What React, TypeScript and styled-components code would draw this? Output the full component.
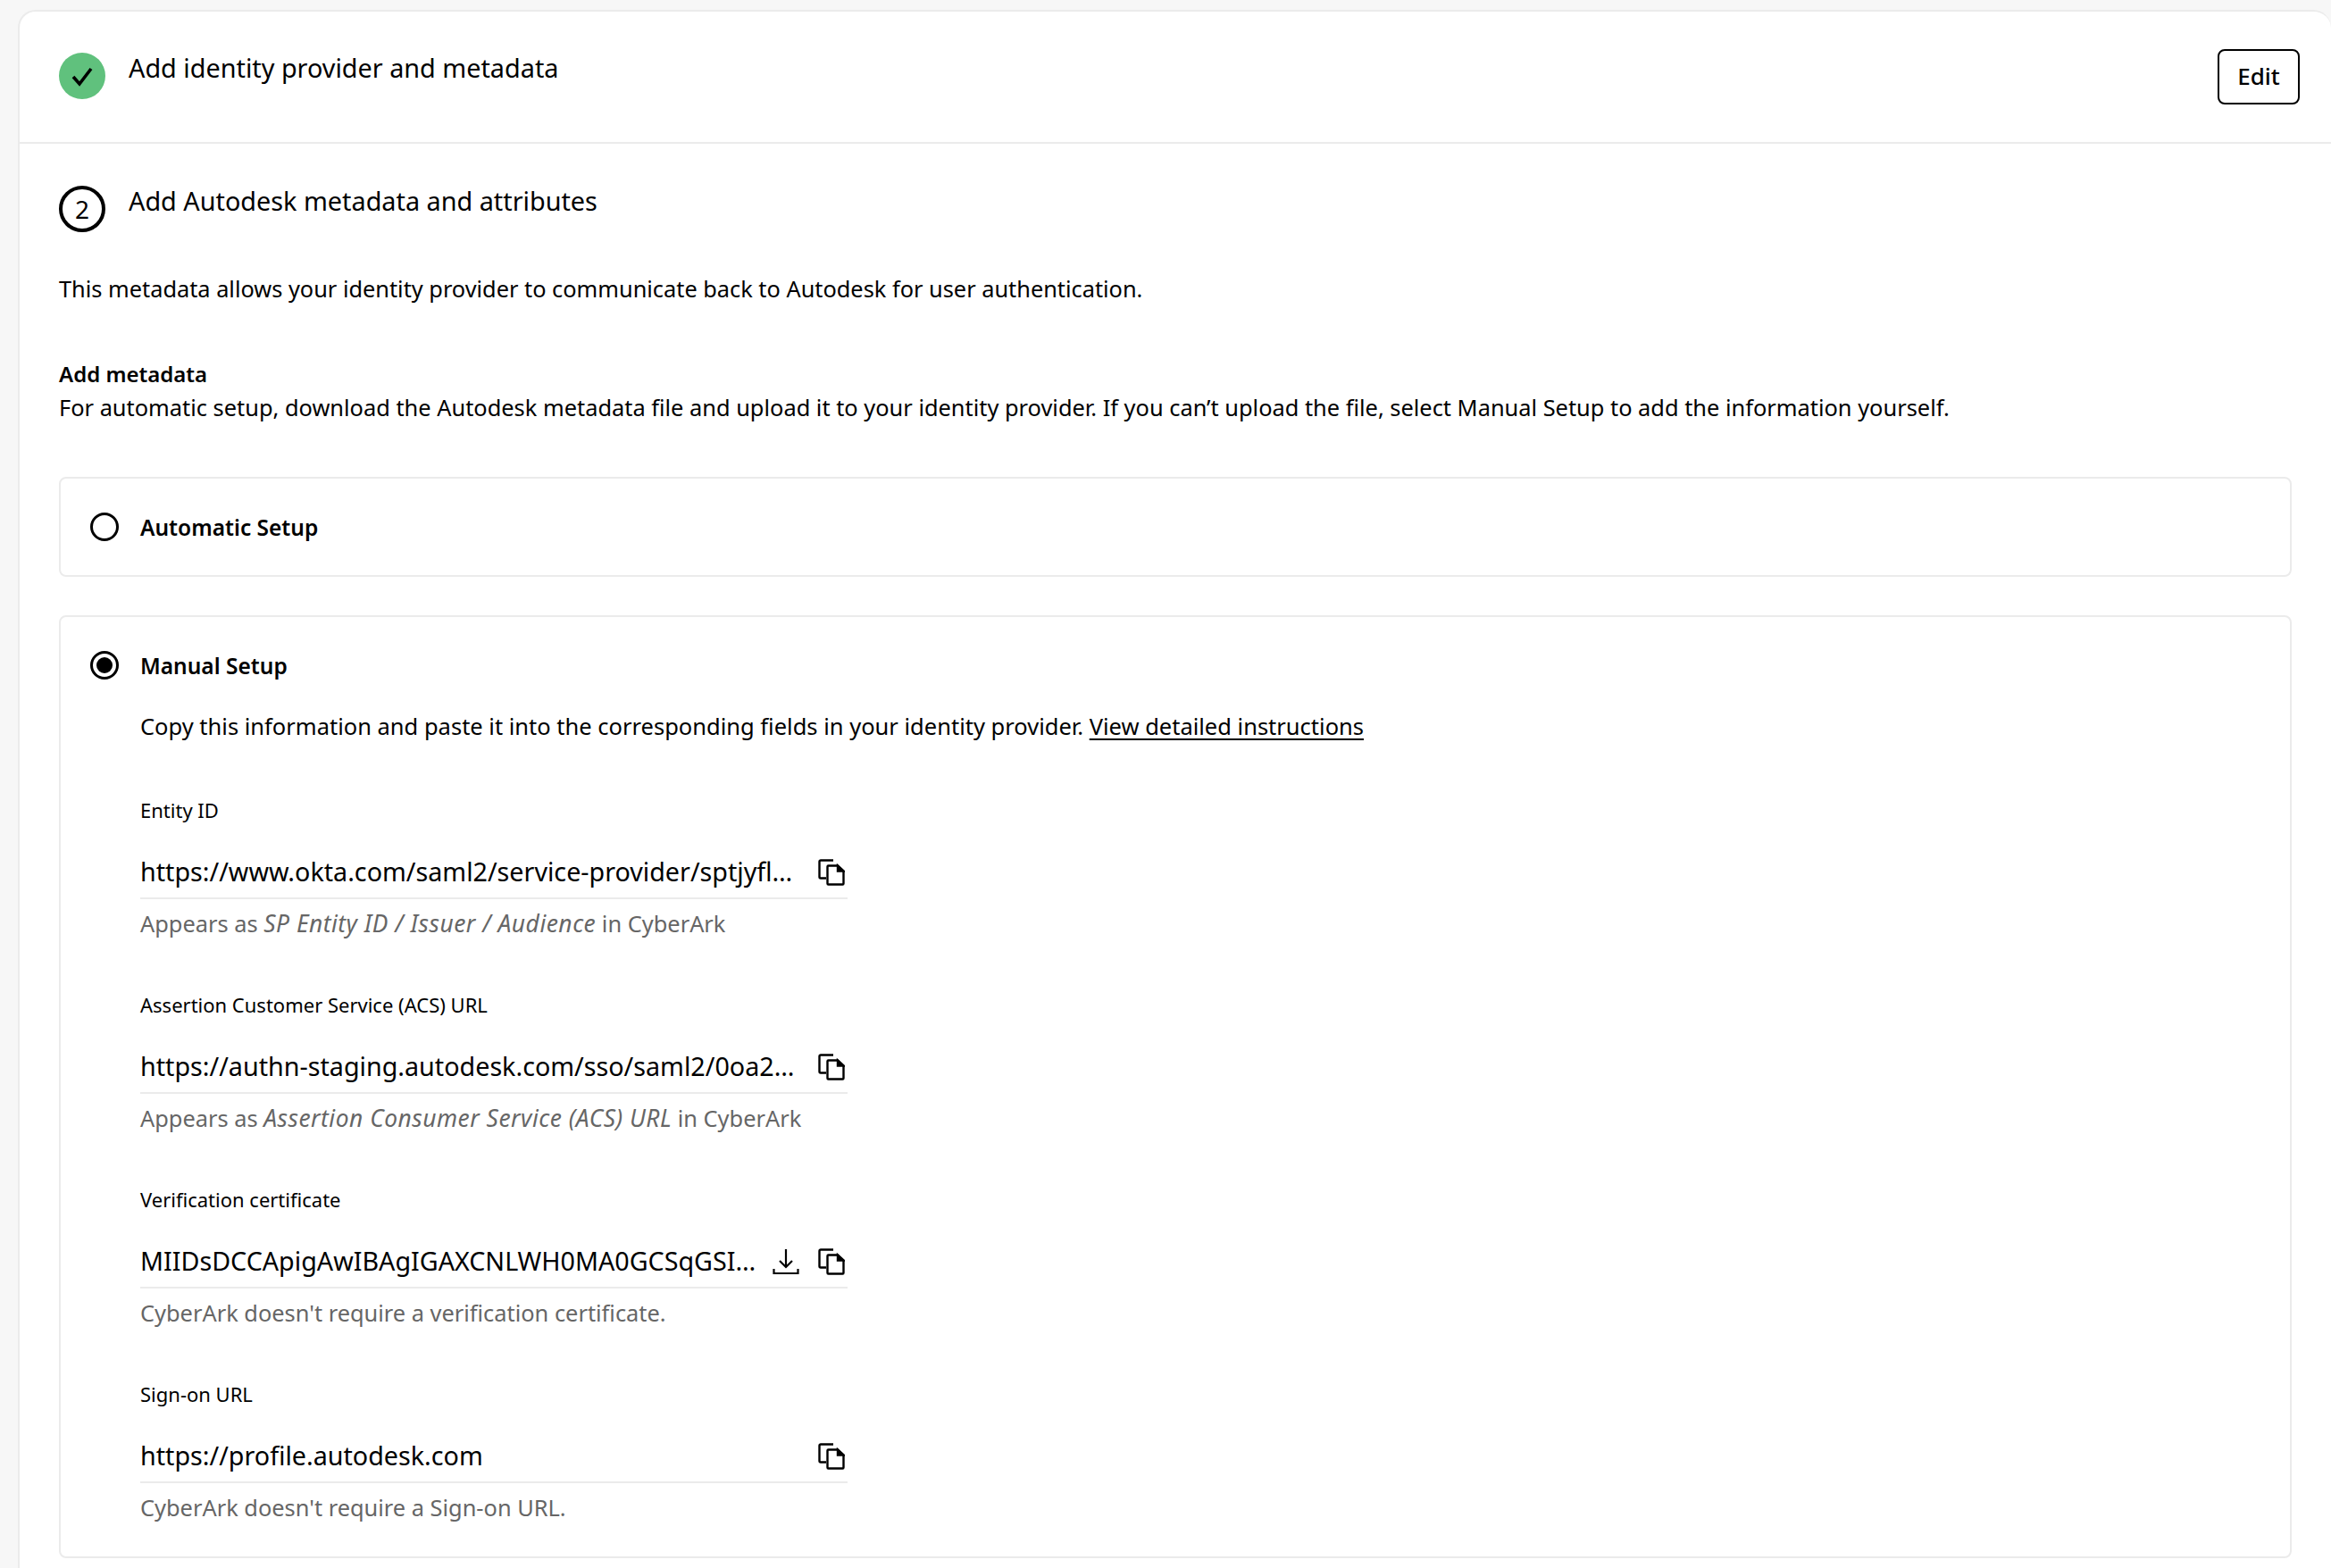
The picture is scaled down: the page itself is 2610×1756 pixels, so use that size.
import styled, { createGlobalStyle } from 'styled-components';

const GlobalStyle = createGlobalStyle`
  html, body {
    margin: 0;
    height: 1756px;
    overflow: hidden;
    background: #f7f7f7;
    color: #000;
    font-family: "Noto Sans", "Open Sans", sans-serif;
  }
  * { box-sizing: border-box; }
`;

const Page = styled.div`
  padding: 11px 0 0 20px;
  height: 1756px;
  overflow: hidden;
`;

const Card = styled.div`
  background: #fff;
  border: 2px solid #ebebeb;
  border-right: none;
  border-radius: 20px 20px 0 0;
  width: 2590px;
  padding-bottom: 100px;
`;

const DoneStep = styled.section`
  display: flex;
  justify-content: space-between;
  height: 148px;
  padding: 46px 35px 0 44px;
  border-bottom: 2px solid #ebebeb;
`;

const StepHeading = styled.div`
  display: flex;
  gap: 26px;
`;

const StepTitle = styled.h2`
  margin: -3px 0 0;
  font-size: 28.8px;
  line-height: 40px;
  font-weight: 400;
`;

const DoneBadge = styled.span`
  width: 52px;
  height: 52px;
  border-radius: 50%;
  background: #60c17d;
  display: flex;
  align-items: center;
  justify-content: center;
`;

const NumberBadge = styled.span`
  width: 52px;
  height: 52px;
  border-radius: 50%;
  border: 4px solid #000;
  display: flex;
  align-items: center;
  justify-content: center;
  font-size: 28px;
`;

const EditButton = styled.button`
  width: 92px;
  height: 62px;
  margin-top: -4px;
  background: #fff;
  border: 2px solid #000;
  border-radius: 8px;
  font-family: inherit;
  font-size: 26px;
  font-weight: 500;
  color: #000;
  padding: 0 0 3px;
`;

const ActiveStep = styled.section`
  padding: 47px 0 0 44px;
`;

const Intro = styled.p`
  margin: 45px 0 0;
  font-size: 25.35px;
  line-height: 36px;
`;

const SubHeading = styled.h3`
  margin: 60px 0 0;
  font-size: 24px;
  line-height: 36px;
  font-weight: 600;
`;

const SubText = styled.p`
  margin: 0;
  font-size: 25.4px;
  line-height: 38px;
`;

const SetupPanel = styled.div<{ $height: number; $gap: number }>`
  width: 2500px;
  height: ${({ $height }) => $height}px;
  margin-top: ${({ $gap }) => $gap}px;
  padding: 32px 0 0 33px;
  border: 2px solid #ebebeb;
  border-radius: 8px;
`;

const RadioRow = styled.div`
  display: flex;
  align-items: center;
  gap: 24px;
  height: 44px;
`;

const Radio = styled.span<{ $checked?: boolean }>`
  width: 32px;
  height: 32px;
  border: 3px solid #000;
  border-radius: 50%;
  display: flex;
  align-items: center;
  justify-content: center;

  &::after {
    content: '';
    display: ${({ $checked }) => ($checked ? 'block' : 'none')};
    width: 18px;
    height: 18px;
    border-radius: 50%;
    background: #000;
  }
`;

const RadioLabel = styled.span`
  font-size: 24.5px;
  font-weight: 600;
`;

const SetupBody = styled.div`
  padding-left: 56px;
`;

const Instructions = styled.p`
  margin: 28px 0 0;
  font-size: 25.5px;
  line-height: 36px;
`;

const InstructionLink = styled.a`
  color: #000;
  text-decoration: underline;
  text-underline-offset: 4px;
`;

const Fields = styled.div`
  margin-top: 61px;
  display: flex;
  flex-direction: column;
  gap: 55px;
`;

const Field = styled.div`
  width: 792px;
  height: 163px;
`;

const FieldLabel = styled.label`
  display: block;
  font-size: 22px;
  line-height: 30px;
`;

const ValueRow = styled.div`
  display: flex;
  align-items: center;
  height: 61px;
  margin-top: 24px;
  border-bottom: 2px solid #ebebeb;
`;

const Value = styled.span`
  flex: 1;
  min-width: 0;
  font-size: 28.7px;
  white-space: nowrap;
`;

const IconButton = styled.span`
  display: flex;
  margin-left: 18px;
  margin-right: 3px;
  margin-top: 2px;
`;

const Hint = styled.p`
  margin: 9px 0 0;
  font-size: 25.4px;
  line-height: 36px;
  color: #666;
`;

const HintTerm = styled.em`
  font-size: 26.4px;
  letter-spacing: 0.5px;
`;

const CopyIcon = () => (
  <svg width="30" height="30" viewBox="0 0 30 30" fill="none" stroke="#000" strokeWidth="2.4">
    <path d="M17 1.5H3a1.5 1.5 0 0 0-1.5 1.5v17a1.5 1.5 0 0 0 1.5 1.5h6" />
    <path d="M11.5 7.5H22l6.5 6v14a1 1 0 0 1-1 1h-16a1 1 0 0 1-1-1v-19a1 1 0 0 1 1-1z" />
    <path d="M22 7.5v6h6.5z" fill="#000" />
  </svg>
);

const DownloadIcon = () => (
  <svg width="30" height="30" viewBox="0 0 30 30" fill="none" stroke="#000" strokeWidth="2.2">
    <path d="M15 1v20M8 14l7 7 7-7" />
    <path d="M1.5 23v5h27v-5" />
  </svg>
);

const fields = [
  {
    label: 'Entity ID',
    value: 'https://www.okta.com/saml2/service-provider/sptjyfl…',
    hint: (
      <>
        Appears as <HintTerm>SP Entity ID / Issuer / Audience</HintTerm> in CyberArk
      </>
    ),
  },
  {
    label: 'Assertion Customer Service (ACS) URL',
    value: 'https://authn-staging.autodesk.com/sso/saml2/0oa2…',
    hint: (
      <>
        Appears as <HintTerm>Assertion Consumer Service (ACS) URL</HintTerm> in CyberArk
      </>
    ),
  },
  {
    label: 'Verification certificate',
    value: 'MIIDsDCCApigAwIBAgIGAXCNLWH0MA0GCSqGSI…',
    download: true,
    hint: "CyberArk doesn't require a verification certificate.",
  },
  {
    label: 'Sign-on URL',
    value: 'https://profile.autodesk.com',
    hint: "CyberArk doesn't require a Sign-on URL.",
  },
];

export default function App() {
  return (
    <Page>
      <GlobalStyle />
      <Card>
        <DoneStep>
          <StepHeading>
            <DoneBadge>
              <svg width="24" height="24" viewBox="0 0 24 24" fill="none" stroke="#000" strokeWidth="3.6">
                <path d="M2 13l7 8L22 4" />
              </svg>
            </DoneBadge>
            <StepTitle>Add identity provider and metadata</StepTitle>
          </StepHeading>
          <EditButton>Edit</EditButton>
        </DoneStep>
        <ActiveStep>
          <StepHeading>
            <NumberBadge>2</NumberBadge>
            <StepTitle>Add Autodesk metadata and attributes</StepTitle>
          </StepHeading>
          <Intro>This metadata allows your identity provider to communicate back to Autodesk for user authentication.</Intro>
          <SubHeading>Add metadata</SubHeading>
          <SubText>
            For automatic setup, download the Autodesk metadata file and upload it to your identity provider. If you can’t upload the file, select Manual Setup to add the information yourself.
          </SubText>
          <SetupPanel $height={112} $gap={59}>
            <RadioRow>
              <Radio />
              <RadioLabel>Automatic Setup</RadioLabel>
            </RadioRow>
          </SetupPanel>
          <SetupPanel $height={1056} $gap={43}>
            <RadioRow>
              <Radio $checked />
              <RadioLabel>Manual Setup</RadioLabel>
            </RadioRow>
            <SetupBody>
              <Instructions>
                Copy this information and paste it into the corresponding fields in your identity provider.{' '}
                <InstructionLink>View detailed instructions</InstructionLink>
              </Instructions>
              <Fields>
                {fields.map((field) => (
                  <Field key={field.label}>
                    <FieldLabel>{field.label}</FieldLabel>
                    <ValueRow>
                      <Value>{field.value}</Value>
                      {field.download && (
                        <IconButton>
                          <DownloadIcon />
                        </IconButton>
                      )}
                      <IconButton>
                        <CopyIcon />
                      </IconButton>
                    </ValueRow>
                    <Hint>{field.hint}</Hint>
                  </Field>
                ))}
              </Fields>
            </SetupBody>
          </SetupPanel>
        </ActiveStep>
      </Card>
    </Page>
  );
}
